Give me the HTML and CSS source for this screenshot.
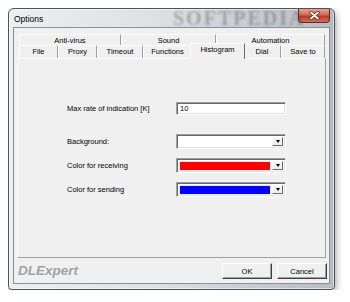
FILE: index.html
```html
<!DOCTYPE html>
<html lang="en">
<head>
  <meta charset="UTF-8">
  <title>Options</title>
  <link rel="stylesheet" href="styles.css">
</head>
<body>
  <div class="window">
    <div class="titlebar">
      <span class="title">Options</span>
      <span class="watermark">SOFTPEDIA</span>
      <div class="close">
        <svg width="11" height="9" viewBox="0 0 11 9">
          <path d="M2 1.5 L9 7.5 M9 1.5 L2 7.5" stroke="#5a1d14" stroke-width="3.2" stroke-linecap="round"/>
          <path d="M2 1.5 L9 7.5 M9 1.5 L2 7.5" stroke="#fff" stroke-width="1.8" stroke-linecap="round"/>
        </svg>
      </div>
    </div>

    <div class="client">
      <div class="tabs">
        <div class="tab-row back">
          <div class="tab">Anti-virus</div>
          <div class="tab">Sound</div>
          <div class="tab">Automation</div>
        </div>
        <div class="tab-row front">
          <div class="tab">File</div>
          <div class="tab">Proxy</div>
          <div class="tab">Timeout</div>
          <div class="tab">Functions</div>
          <div class="tab active">Histogram</div>
          <div class="tab">Dial</div>
          <div class="tab">Save to</div>
        </div>
      </div>

      <div class="panel">
        <div class="form">
          <label class="first">Max rate of indication [K]</label>
          <div class="field edit">10</div>

          <label>Background:</label>
          <div class="field combo"><span class="swatch"></span><span class="drop"></span></div>

          <label>Color for receiving</label>
          <div class="field combo"><span class="swatch red"></span><span class="drop"></span></div>

          <label>Color for sending</label>
          <div class="field combo"><span class="swatch blue"></span><span class="drop"></span></div>
        </div>
      </div>

      <div class="footer">
        <span class="brand">DLExpert</span>
        <div class="buttons">
          <button>OK</button>
          <button>Cancel</button>
        </div>
      </div>
    </div>
  </div>
</body>
</html>
```

FILE: styles.css
```css
body {
  margin: 8px;
  background: #fff;
  font-family: "Liberation Sans", Arial, sans-serif;
  font-size: 7.5px;
  color: #000;
}
.window {
  width: 317px;
  height: 275px;
  padding: 0 4px 5px 4px;
  border: 1px solid #4d5258;
  border-radius: 6px 6px 4px 4px;
  background: linear-gradient(to right, #eceff1 0%, #dde1e4 45%, #b6bbc1 100%);
  box-shadow: 0 3px 9px rgba(0, 0, 0, 0.45), inset 0 0 0 1px rgba(255, 255, 255, 0.55);
  display: flex;
  flex-direction: column;
}
.titlebar {
  height: 18px;
  display: flex;
  align-items: center;
  position: relative;
}
.title {
  font-size: 8.5px;
  padding-left: 1px;
  margin-top: 1px;
}
.watermark {
  position: absolute;
  left: 160px;
  top: -2px;
  font-family: "Liberation Serif", serif;
  font-weight: bold;
  font-size: 20px;
  letter-spacing: 2px;
  color: rgba(70, 70, 70, 0.35);
  filter: blur(1px);
}
.close {
  margin-left: auto;
  align-self: flex-start;
  width: 30px;
  height: 13px;
  border: 1px solid #5f2b22;
  border-top: none;
  border-radius: 0 0 4px 4px;
  background: linear-gradient(#e4a496, #cf6a58 45%, #b8392a 55%, #d0705c);
  display: flex;
  align-items: center;
  justify-content: center;
}
.client {
  flex: 1;
  background: #f0f0f0;
  border: 1px solid #8b9197;
  display: flex;
  flex-direction: column;
}
.tabs {
  margin: 6px 0 0 5px;
}
.tab-row {
  display: grid;
}
.tab-row.back {
  grid-template-columns: 102px 95px 109px;
  height: 11px;
}
.tab-row.front {
  grid-template-columns: 39px 39px 46px 49px 51px 38px 44px;
  height: 13px;
}
.tab {
  border-top: 1px solid #fff;
  border-left: 1px solid #fff;
  border-right: 1px solid #a0a0a0;
  text-align: center;
  line-height: 11px;
  background: #f0f0f0;
}
.tab-row.front .tab {
  line-height: 12px;
}
.tab.active {
  margin: -2px -2px -1px -2px;
  position: relative;
  z-index: 1;
  line-height: 12px;
  border-right-color: #696969;
}
.panel {
  height: 198px;
  margin: 0 3px;
  border-top: 1px solid #fff;
  border-left: 1px solid #fff;
  border-right: 1px solid #a0a0a0;
  border-bottom: 1px solid #a0a0a0;
}
.form {
  display: grid;
  grid-template-columns: 109px 110px;
  grid-template-rows: 23px 15px 15px 15px;
  row-gap: 9px;
  align-items: center;
  padding: 43px 0 0 49px;
}
.form label.first {
  align-self: start;
  line-height: 13px;
}
.field {
  height: 15px;
  box-sizing: border-box;
  background: #fff;
  border: 1px solid;
  border-color: #a0a0a0 #fff #fff #a0a0a0;
  box-shadow: inset 1px 1px 0 #696969, inset -1px -1px 0 #e3e3e3;
}
.edit {
  height: 13px;
  line-height: 11px;
  padding-left: 3px;
  align-self: start;
}
.combo {
  display: flex;
  padding: 2px;
  gap: 1px;
}
.swatch {
  flex: 1;
  margin: 1px 1px 0 1px;
}
.swatch.red {
  background: #ff0000;
  outline: 1px solid #e8e8e8;
}
.swatch.blue {
  background: #0000ff;
  outline: 1px solid #e8e8e8;
}
.drop {
  width: 9px;
  background: #f0f0f0;
  border: 1px solid;
  border-color: #fff #696969 #696969 #fff;
  display: flex;
  align-items: center;
  justify-content: center;
}
.drop::after {
  content: "";
  border-top: 3px solid #000;
  border-left: 2.5px solid transparent;
  border-right: 2.5px solid transparent;
}
.footer {
  flex: 1;
  display: flex;
  justify-content: space-between;
  align-items: flex-start;
  padding: 5px 2px 0 4px;
}
.brand {
  font-weight: bold;
  font-style: italic;
  font-size: 13.5px;
  color: #a3a3a3;
}
.buttons {
  display: flex;
  gap: 5px;
}
.buttons button {
  width: 50px;
  height: 16px;
  padding: 0;
  font-family: inherit;
  font-size: 7.5px;
  background: #f0f0f0;
  border: 1px solid;
  border-color: #fff #404040 #404040 #fff;
  box-shadow: inset -1px -1px 0 #a0a0a0;
}
```
